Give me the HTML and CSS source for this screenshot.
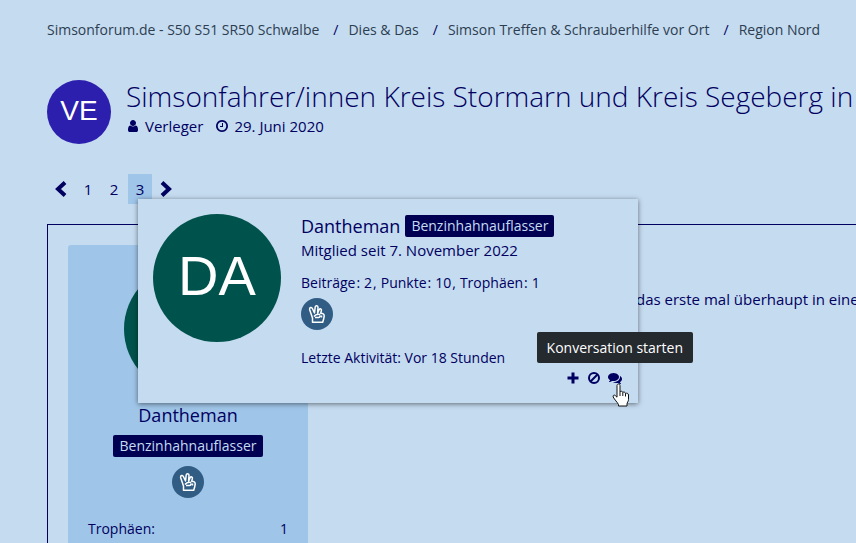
FILE: index.html
```html
<!DOCTYPE html>
<html lang="de">
<head>
<meta charset="utf-8">
<title>Simsonforum.de</title>
<link rel="stylesheet" href="styles.css">
</head>
<body>
<svg class="sprite" aria-hidden="true">
  <symbol id="hand" viewBox="0 0 32 32">
    <path d="M11.500 24.200V20L8.600 11.500C8.200 9.300 10.600 8.700 11.400 10.500L13.500 15L14.200 8.900C14.600 7.100 17 7.300 17 9.200L16.600 15.200L18.200 11.500C19 10.200 20.800 11 20.400 12.500L19.700 15.200C22.200 15.200 23.400 16.200 23.200 18.200L22.600 21.300L21.700 24.200Z"/>
    <path d="M13 18.500C14.500 16.200 17 16 19.300 16.500M14 19.500H17.500C18.500 19.500 19 18.500 19 17.500M20.500 17.500V19.500"/>
  </symbol>
</svg>
<div class="page">
  <nav aria-label="Brotkrumen">
    <ol class="crumbs">
      <li><a href="#">Simsonforum.de - S50 S51 SR50 Schwalbe</a></li>
      <li><a href="#">Dies &amp; Das</a></li>
      <li><a href="#">Simson Treffen &amp; Schrauberhilfe vor Ort</a></li>
      <li><a href="#">Region Nord</a></li>
    </ol>
  </nav>

  <header class="thread">
    <div class="avatar avatar-small">VE</div>
    <div class="thread-text">
      <h1>Simsonfahrer/innen Kreis Stormarn und Kreis Segeberg in</h1>
      <ul class="meta">
        <li>
          <svg class="icon" viewBox="0 0 1792 1792" aria-hidden="true"><path d="M1536 1399q0 109-62.500 187t-150.500 78h-854q-88 0-150.500-78t-62.500-187q0-85 8.500-160.500t31.500-152 58.500-131 94-89 134.500-34.500q131 128 313 128t313-128q76 0 134.500 34.500t94 89 58.500 131 31.500 152 8.500 160.500zm-256-887q0 159-112.500 271.500t-271.500 112.500-271.500-112.500-112.500-271.500 112.500-271.500 271.500-112.500 271.500 112.500 112.500 271.500z"/></svg>
          <a href="#">Verleger</a>
        </li>
        <li>
          <svg class="icon" viewBox="0 0 1792 1792" aria-hidden="true"><path d="M1024 544v448q0 14-9 23t-23 9h-320q-14 0-23-9t-9-23v-64q0-14 9-23t23-9h224v-352q0-14 9-23t23-9h64q14 0 23 9t9 23zm416 352q0-148-73-273t-198-198-273-73-273 73-198 198-73 273 73 273 198 198 273 73 273-73 198-198 73-273zm224 0q0 209-103 385.500t-279.500 279.500-385.500 103-385.500-103-279.500-279.500-103-385.500 103-385.500 279.500-279.500 385.500-103 385.500 103 279.500 279.500 103 385.500z"/></svg>
          <a href="#">29. Juni 2020</a>
        </li>
      </ul>
    </div>
  </header>

  <nav class="pages" aria-label="Seiten">
    <a href="#" aria-label="Vorherige Seite"><svg class="chevron" viewBox="0 0 16 20" aria-hidden="true"><path d="M12 3.500L5 10l7 6.500"/></svg></a>
    <a href="#">1</a>
    <a href="#">2</a>
    <a href="#" class="current" aria-current="page">3</a>
    <a href="#" aria-label="Nächste Seite"><svg class="chevron" viewBox="0 0 16 20" aria-hidden="true"><path d="M4 3.500L11 10l-7 6.500"/></svg></a>
  </nav>

  <article class="post">
    <aside class="author">
      <div class="avatar avatar-large"></div>
      <a href="#" class="name">Dantheman</a>
      <span class="badge">Benzinhahnauflasser</span>
      <svg class="trophy" role="img" aria-label="Trophäe"><use href="#hand"/></svg>
      <dl class="stats"><dt>Trophäen:</dt><dd>1</dd></dl>
    </aside>
    <p class="message">das erste mal überhaupt in eine</p>
  </article>

  <section class="card" aria-label="Dantheman">
    <div class="avatar avatar-large">DA</div>
    <div class="card-body">
      <div class="card-head"><a href="#" class="name">Dantheman</a><span class="badge">Benzinhahnauflasser</span></div>
      <p class="since">Mitglied seit 7. November 2022</p>
      <dl class="counts">
        <dt>Beiträge</dt><dd>2</dd>
        <dt>Punkte</dt><dd>10</dd>
        <dt>Trophäen</dt><dd>1</dd>
      </dl>
      <svg class="trophy" role="img" aria-label="Trophäe"><use href="#hand"/></svg>
      <p class="activity">Letzte Aktivität: Vor 18 Stunden</p>
      <div class="actions">
        <button type="button" aria-label="Folgen"><svg class="icon" viewBox="0 0 14 14" aria-hidden="true"><path d="M5.500 1.500h3v4h4v3h-4v4h-3v-4h-4v-3h4z"/></svg></button>
        <button type="button" aria-label="Blockieren"><svg class="icon ban" viewBox="0 0 14 14" aria-hidden="true"><circle cx="7" cy="7" r="5"/><path d="M3.500 10.500l7-7"/></svg></button>
        <button type="button" aria-describedby="tip" aria-label="Konversation starten">
          <svg class="icon" viewBox="0 0 1792 1792" aria-hidden="true"><path d="M1408 768q0 139-94 257t-256.500 186.500-353.500 68.500q-86 0-176-16-124 88-278 128-36 9-86 16h-3q-11 0-20.500-8t-11.500-21q-1-3-1-6.500t.5-6.500 2-6l2.500-5 3.500-5.500 4-5 4.500-5 4-4.500q5-6 23-25t26-29.500 22.500-29 25-38.500 20.500-44q-124-72-195-177t-71-224q0-139 94-257t256.500-186.500 353.500-68.500 353.500 68.500 256.500 186.500 94 257zm384 256q0 120-71 224.500t-195 176.500q10 24 20.500 44t25 38.500 22.500 29 26 29.500 23 25q1 1 4 4.500t4.500 5 4 5 3.500 5.500l2.500 5 2 6 .5 6.500-1 6.500q-3 14-13 22t-22 7q-50-7-86-16-154-40-278-128-90 16-176 16-271 0-472-132 58 4 88 4 161 0 309-45t264-129q125-92 192-212t67-254q0-77-23-152 129 71 204 178t75 230z"/></svg>
          <svg class="pointer" viewBox="0 0 18 24" aria-hidden="true"><path d="M5 2.500C5 .5 8 .5 8 2.500V9C8.500 7.800 10.600 8 10.800 9.500C11.500 8.600 13.300 9 13.500 10.500C14.500 9.800 16.500 10.300 16.500 12V16.500C16.500 18.500 15 19.500 15 21V23H6.500V21.500C5.500 19.500 2.500 16.500 1.200 14C.5 12.200 2.500 11.500 3.600 12.800L5 14.200Z"/><path d="M8 9v4M10.800 9.500V13M13.500 10.500V13.500"/></svg>
        </button>
        <span class="tooltip" id="tip" role="tooltip">Konversation starten</span>
      </div>
    </div>
  </section>
</div>
</body>
</html>
```
FILE: styles.css
```css
* { box-sizing: border-box; }

body {
  margin: 0;
  background: #c5dbf0;
  color: #000060;
  font: 15px/22px "Open Sans", sans-serif;
}

a { color: inherit; text-decoration: none; }
h1, p, ul, ol, dl, dd { margin: 0; padding: 0; }
ul, ol { list-style: none; }

.sprite { position: absolute; width: 0; height: 0; }

.page {
  position: relative;
  min-height: 100vh;
  padding: 20px 0 0 47px;
  overflow: hidden;
  display: flex;
  flex-direction: column;
}

.crumbs {
  display: flex;
  font-size: 14px;
  line-height: 20px;
  color: #2c3e50;
  white-space: nowrap;
}
.crumbs li + li::before {
  content: "/";
  margin: 0 10px 0 14px;
  color: #000060;
}

.thread { display: flex; gap: 15px; margin-top: 40px; white-space: nowrap; }
.thread h1 { font-size: 28px; font-weight: 300; line-height: 32px; }
.meta { display: flex; gap: 12px; margin-top: 3px; }
.meta li { display: flex; align-items: center; gap: 5px; }
.icon { width: 14px; height: 14px; fill: currentColor; }

.avatar {
  flex: none;
  display: flex;
  align-items: center;
  justify-content: center;
  border-radius: 50%;
  color: #fff;
  font-family: "Liberation Sans", sans-serif;
}
.avatar-small { width: 64px; height: 64px; padding-bottom: 2px; font-size: 28px; background: #2c1fad; }
.avatar-large { width: 128px; height: 128px; padding-bottom: 4px; font-size: 56px; background: #00524c; }

.pages { display: flex; gap: 2px; margin-top: 30px; }
.pages a {
  display: flex;
  align-items: center;
  justify-content: center;
  min-width: 24px;
  height: 30px;
}
.pages a:first-child { width: 27px; }
.pages .current { background: #9fc5e8; }
.chevron { width: 16px; height: 20px; fill: none; stroke: currentColor; stroke-width: 4; }

.post {
  flex: 1;
  display: flex;
  gap: 20px;
  margin-top: 20px;
  padding: 20px 0 0 20px;
  border: solid #000060;
  border-width: 1px 0 0 1px;
}
.author {
  flex: none;
  width: 240px;
  display: flex;
  flex-direction: column;
  align-items: center;
  padding: 20px;
  border-radius: 3px 3px 0 0;
  background: #9fc5e8;
}
.name { font-size: 18px; line-height: 24px; }
.author .name { margin: 10px 0 8px; }
.badge {
  padding: 0 6px;
  border-radius: 2px;
  background: #000052;
  color: #c5dbf0;
  font-size: 14px;
  line-height: 22px;
}
.trophy {
  display: block;
  width: 32px;
  height: 32px;
  border-radius: 50%;
  background: #315d85;
  fill: none;
  stroke: #fff;
  stroke-width: 1.5;
  stroke-linejoin: round;
}
.author .trophy { margin: 9px 0 20px; }
.stats {
  align-self: stretch;
  display: flex;
  justify-content: space-between;
  font-size: 14px;
}
.message {
  flex: 1;
  margin-top: 43px;
  padding-left: 308px;
  white-space: nowrap;
}

.card {
  position: absolute;
  top: 199px;
  left: 138px;
  width: 500px;
  display: flex;
  gap: 20px;
  padding: 15px 15px 18px;
  background: #c5dbf0;
  box-shadow: 0 1px 5px rgba(0, 0, 0, .5);
}
.card-body { flex: 1; }
.card-head { display: flex; align-items: center; gap: 5px; }
.since { margin-top: 1px; }
.counts, .activity { font-size: 14px; }
.counts { display: flex; margin: 11px 0 4px; }
.counts dt::after { content: ":"; margin: 0 4px 0 1px; }
.counts dd:not(:last-child)::after { content: ","; margin: 0 4px 0 1px; }
.activity { margin-top: 17px; }
.actions { position: relative; display: flex; justify-content: flex-end; gap: 7px; margin: 2px 1px 0 0; }
.actions button {
  position: relative;
  display: flex;
  padding: 0;
  border: 0;
  background: none;
  color: inherit;
}
.ban { fill: none; stroke: currentColor; stroke-width: 2; }
.pointer {
  position: absolute;
  top: 12px;
  left: 4px;
  z-index: 1;
  width: 18px;
  height: 24px;
  fill: #fff;
  stroke: #111;
}
.tooltip {
  position: absolute;
  right: -71px;
  bottom: 22px;
  padding: 5px 10px;
  border-radius: 2px;
  background: #252a2f;
  color: #fff;
  font-size: 14px;
  line-height: 21px;
  white-space: nowrap;
}
```
